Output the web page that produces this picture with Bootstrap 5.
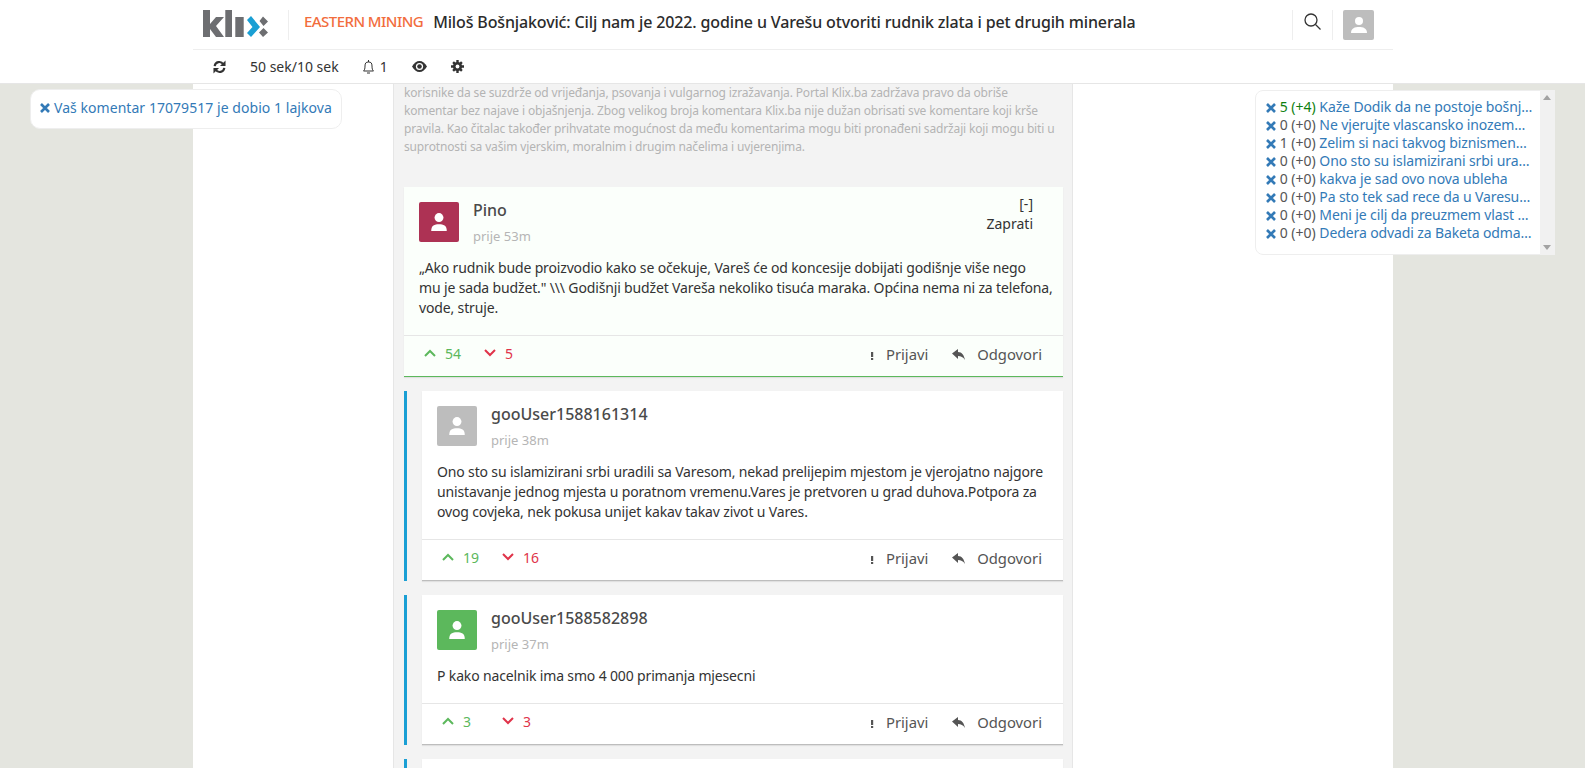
<!DOCTYPE html>
<html lang="bs">
<head>
    <meta charset="UTF-8">
    <title>Klix</title>
    <link href="https://cdn.jsdelivr.net/npm/bootstrap@5.3.0/dist/css/bootstrap.min.css" rel="stylesheet">
    <style>
        html, body { height: 768px; overflow: hidden; }
        html { background: #fff; }
        body { background: #e4e5df; font-family: "Noto Sans", sans-serif; font-size: 14px; color: #333; margin-right: 2px; }
        .top-bar { background: #fff; border-bottom: 1px solid #e6e6e6; height: 84px; margin-right: -2px; }
        .top-inner { width: 1200px; margin-left: 193px; }
        .top-row { height: 50px; border-bottom: 1px solid #eee; padding-left: 10px; }
        .tool-row { height: 33px; padding-left: 20px; gap: 24px; font-size: 14px; color: #333; }
        .brand-logo { width: 65px; height: 27px; margin-bottom: 2px; }
        .head-sep { width: 1px; height: 30px; background: #eee; }
        .logo-sep { margin-left: 20px; margin-right: 15px; }
        .head-text { margin-bottom: 6px; }
        .kicker { color: #f26d3d; font-size: 15px; font-weight: 500; letter-spacing: -.55px; margin-right: 10px; }
        .headline { font-size: 16px; font-weight: 500; color: #2b2b2b; letter-spacing: -.14px; }
        .search-ico { margin: 0 11px 6px; }
        .page-wrap { width: 1200px; margin-left: 193px; background: #fff; height: 684px; padding-left: 200px; }
        .comment-col { width: 680px; height: 684px; background: #f3f3f3; border-left: 1px solid #e6e6e6; border-right: 1px solid #e6e6e6; padding: 0 9px 0 10px; overflow: hidden; }
        .rules-text { font-size: 12px; line-height: 18px; color: #b4b4b4; height: 103px; margin: 0; white-space: nowrap; letter-spacing: -.15px; }
        .comment-box { background: #fff; box-shadow: 0 1px 1px rgba(0,0,0,.08); border-bottom: 1px solid #bdbdbd; margin-bottom: 14px; }
        .comment-box.top-one { background: #fbfffb; border-bottom-color: #5cb85c; }
        .reply-wrap { border-left: 3px solid #1a9fd4; padding-left: 15px; margin-bottom: 14px; }
        .reply-wrap .comment-box { margin-bottom: 0; }
        .comment-head { padding: 15px 15px 0; height: 59px; }
        .user-pic { width: 40px; height: 40px; border-radius: 2px; display: flex; align-items: center; justify-content: center; flex: none; }
        .head-avatar { width: 31px; height: 30px; background: #bdbdbd; margin-left: 10px; margin-right: 19px; }
        .user-meta { margin-left: 14px; }
        .user-name { font-size: 16px; font-weight: 500; color: #4a4a4a; line-height: 20px; margin-top: -2px; }
        .user-time { font-size: 13px; color: #b5b5b5; margin-top: 7px; line-height: 18px; }
        .follow-box { margin: -8px 15px 0 0; line-height: 20px; }
        .comment-body { padding: 12px 8px 17px 15px; line-height: 20px; color: #333; margin: 0; letter-spacing: -.15px; }
        .comment-foot { border-top: 1px solid #e6e6e6; height: 41px; padding: 0 21px 3px 20px; }
        .vote-up { color: #5cb85c; width: 60px; gap: 9px; margin-top: -3px; }
        .vote-down { color: #e0344a; gap: 9px; margin-top: -3px; }
        .foot-link { color: #555; font-size: 14.8px; }
        .notice-box { position: fixed; left: 30px; top: 89px; width: 312px; height: 40px; background: #fff; border: 1px solid #eee; border-radius: 10px; padding: 0 9px 3px; color: #337ab7; letter-spacing: .05px; z-index: 5; }
        .live-box { position: fixed; left: 1255px; top: 90px; width: 300px; height: 165px; background: #fff; border-radius: 8px 0 0 8px; border: 1px solid #eee; padding: 7px 10px 0 10px; color: #337ab7; line-height: 18px; z-index: 5; }
        .live-row { white-space: nowrap; }
        .live-title { letter-spacing: -.12px; }
        .live-num { color: #555; }
        .live-num.up { color: #0f7f0f; }
        .live-scroll { position: absolute; right: -1px; top: -1px; bottom: -1px; width: 15px; background: #f1f1f1; }
        .arrow-up, .arrow-down { position: absolute; left: 3px; width: 0; height: 0; border-left: 4px solid transparent; border-right: 4px solid transparent; }
        .arrow-up { top: 5px; border-bottom: 5px solid #a3a3a3; }
        .arrow-down { bottom: 5px; border-top: 5px solid #a3a3a3; }
    </style>
</head>
<body>
    <!-- Header -->
    <div class="top-bar">
        <div class="top-inner">
            <div class="top-row d-flex align-items-center">
                <svg class="brand-logo" viewBox="0 0 65 27">
                    <path fill="#6d6e71" d="M0 0h7v14l6-7h8l-8 9 8 11h-8l-6-8v8H0zM22.300 0h6.700v27h-6.700zM32.300 7h8.400v20h-8.400z"/>
                    <path fill="#1a9fd4" d="M44 10l4-4 9 11-9 10-4-4 5.500-6z"/>
                    <path fill="#6d6e71" d="M60 6.500l5 5-4.500 4.500-4-5zM60.500 18l4.500 4.500-5 4.500-4-4.500z"/>
                </svg>
                <div class="head-sep logo-sep"></div>
                <span class="kicker head-text">EASTERN MINING</span>
                <span class="headline head-text">Miloš Bošnjaković: Cilj nam je 2022. godine u Varešu otvoriti rudnik zlata i pet drugih minerala</span>
                <div class="head-sep ms-auto"></div>
                <svg class="search-ico" width="17" height="17" viewBox="0 0 17 17" fill="none" stroke="#333" stroke-width="1.300"><circle cx="7" cy="7" r="6"/><path d="M11.500 11.500l5 5"/></svg>
                <div class="head-sep"></div>
                <div class="user-pic head-avatar">
                    <svg width="18" height="18" viewBox="0 0 18 18" fill="#fff"><circle cx="9" cy="5" r="4"/><path d="M1 17c0-5 4-6 8-6s8 1 8 6z"/></svg>
                </div>
            </div>
            <div class="tool-row d-flex align-items-center">
                <svg width="13" height="14" viewBox="0 0 14 14" fill="none" stroke="#333" stroke-width="2.300"><path d="M1.800 6a5 5 0 0 1 9.200-2M12.200 8a5 5 0 0 1-9.200 2"/><path fill="#333" stroke="none" d="M13.500 0v6h-6zM.5 14V8h6z"/></svg>
                <span>50 sek/10 sek</span>
                <span class="d-flex align-items-center" style="gap:6px">
                    <svg width="11" height="14" viewBox="0 0 11 14" fill="none" stroke="#333"><path d="M.5 11c1-1 1.500-2 1.500-5s1-4 3.500-4S9 3 9 6s.5 4 1.500 5zM4 13h3M5.500 0v2"/></svg>1</span>
                <svg width="15" height="11" viewBox="0 0 15 11"><path fill="#333" d="M0 5.500C2 2 4.500 0 7.500 0S13 2 15 5.500C13 9 10.500 11 7.500 11S2 9 0 5.500z"/><circle cx="7.500" cy="5.500" r="3.600" fill="#fff"/><circle cx="7.500" cy="5.500" r="2.300" fill="#333"/></svg>
                <svg width="13" height="13" viewBox="0 0 13 13"><path stroke="#333" stroke-width="2.400" d="M6.500 0v13M0 6.500h13M2.100 2.100l8.800 8.800M10.900 2.100l-8.800 8.800"/><circle cx="6.500" cy="6.500" r="4.600" fill="#333"/><circle cx="6.500" cy="6.500" r="1.900" fill="#fff"/></svg>
            </div>
        </div>
    </div>

    <!-- Notices -->
    <div class="notice-box d-flex align-items-center gap-1">
        <svg width="10" height="10" viewBox="0 0 10 10" stroke="#337ab7" stroke-width="2.600"><path d="M1 1l8 8M9 1l-8 8"/></svg>
        <span>Vaš komentar 17079517 je dobio 1 lajkova</span>
    </div>
    <div class="live-box" id="live-box">
        <div class="live-scroll"><div class="arrow-up"></div><div class="arrow-down"></div></div>
    </div>

    <div class="page-wrap">
        <div class="comment-col" id="comment-col">
            <p class="rules-text">korisnike da se suzdrže od vrijeđanja, psovanja i vulgarnog izražavanja. Portal Klix.ba zadržava pravo da obriše<br>komentar bez najave i objašnjenja. Zbog velikog broja komentara Klix.ba nije dužan obrisati sve komentare koji krše<br>pravila. Kao čitalac također prihvatate mogućnost da među komentarima mogu biti pronađeni sadržaji koji mogu biti u<br>suprotnosti sa vašim vjerskim, moralnim i drugim načelima i uvjerenjima.</p>
        </div>
    </div>

    <script>
        var live = [
            ['5', '(+4)', 'Kaže Dodik da ne postoje bošnj…', true],
            ['0', '(+0)', 'Ne vjerujte vlascansko inozem…'],
            ['1', '(+0)', 'Zelim si naci takvog biznismen…'],
            ['0', '(+0)', 'Ono sto su islamizirani srbi ura…'],
            ['0', '(+0)', 'kakva je sad ovo nova ubleha'],
            ['0', '(+0)', 'Pa sto tek sad rece da u Varesu…'],
            ['0', '(+0)', 'Meni je cilj da preuzmem vlast …'],
            ['0', '(+0)', 'Dedera odvadi za Baketa odma…']
        ];
        var x = '<svg width="10" height="10" viewBox="0 0 10 10" stroke="#337ab7" stroke-width="2.600"><path d="M1 1l8 8M9 1l-8 8"/></svg> ';
        var liveHtml = '';
        live.forEach(function (r) {
            liveHtml += '<div class="live-row">' + x + '<span class="live-num' + (r[3] ? ' up' : '') + '">' + r[0] + ' ' + r[1] + '</span> <span class="live-title">' + r[2] + '</span></div>';
        });
        document.getElementById('live-box').insertAdjacentHTML('beforeend', liveHtml);

        var comments = [
            { name: 'Pino', time: 'prije 53m', color: '#ad3254', up: 54, down: 5, top: true,
              text: '„Ako rudnik bude proizvodio kako se očekuje, Vareš će od koncesije dobijati godišnje više nego<br>mu je sada budžet." \\\\\\ Godišnji budžet Vareša nekoliko tisuća maraka. Općina nema ni za telefona, vode, struje.' },
            { name: 'gooUser1588161314', time: 'prije 38m', color: '#bdbdbd', up: 19, down: 16,
              text: 'Ono sto su islamizirani srbi uradili sa Varesom, nekad prelijepim mjestom je vjerojatno najgore unistavanje jednog mjesta u poratnom vremenu.Vares je pretvoren u grad duhova.Potpora za ovog covjeka, nek pokusa unijet kakav takav zivot u Vares.' },
            { name: 'gooUser1588582898', time: 'prije 37m', color: '#5cb85c', up: 3, down: 3,
              text: 'P kako nacelnik ima smo 4 000 primanja mjesecni' }
        ];
        var col = document.getElementById('comment-col');
        comments.forEach(function (c) {
            var box = '<div class="comment-box' + (c.top ? ' top-one' : '') + '">' +
                '<div class="comment-head d-flex">' +
                '<div class="user-pic" style="background:' + c.color + '"><svg width="20" height="20" viewBox="0 0 18 18" fill="#fff"><circle cx="9" cy="5" r="4"/><path d="M2 17c0-5 3-6 7-6s7 1 7 6z"/></svg></div>' +
                '<div class="flex-grow-1 user-meta"><div class="user-name">' + c.name + '</div><div class="user-time">' + c.time + '</div></div>' +
                (c.top ? '<div class="text-end follow-box">[-]<br>Zaprati</div>' : '') +
                '</div>' +
                '<p class="comment-body">' + c.text + '</p>' +
                '<div class="comment-foot d-flex align-items-center">' +
                '<span class="vote-up d-flex align-items-center"><svg width="12" height="8" viewBox="0 0 12 8" fill="none" stroke="#5cb85c" stroke-width="2"><path d="M1 7l5-5 5 5"/></svg>' + c.up + '</span>' +
                '<span class="vote-down d-flex align-items-center"><svg width="12" height="8" viewBox="0 0 12 8" fill="none" stroke="#e0344a" stroke-width="2"><path d="M1 1l5 5 5-5"/></svg>' + c.down + '</span>' +
                '<span class="foot-link ms-auto d-flex align-items-center gap-2"><svg width="4" height="11" viewBox="0 0 4 11" fill="#555"><path d="M1 3h2.200v5H1zM1 9h2.200v2H1z"/></svg>&nbsp;Prijavi</span>' +
                '<span class="foot-link ms-4 d-flex align-items-center gap-2"><svg width="13" height="11" viewBox="0 0 13 11" fill="#555"><path d="M0 4.500L6 0v3c4 0 6 3 7 8-2-3-4-4-7-4v3z"/></svg>&nbsp;Odgovori</span>' +
                '</div></div>';
            col.insertAdjacentHTML('beforeend', c.top ? box : '<div class="reply-wrap">' + box + '</div>');
        });
        // next reply only peeks in at the bottom of the window
        col.insertAdjacentHTML('beforeend', '<div class="reply-wrap"><div class="comment-box" style="height:60px"></div></div>');
    </script>
</body>
</html>
